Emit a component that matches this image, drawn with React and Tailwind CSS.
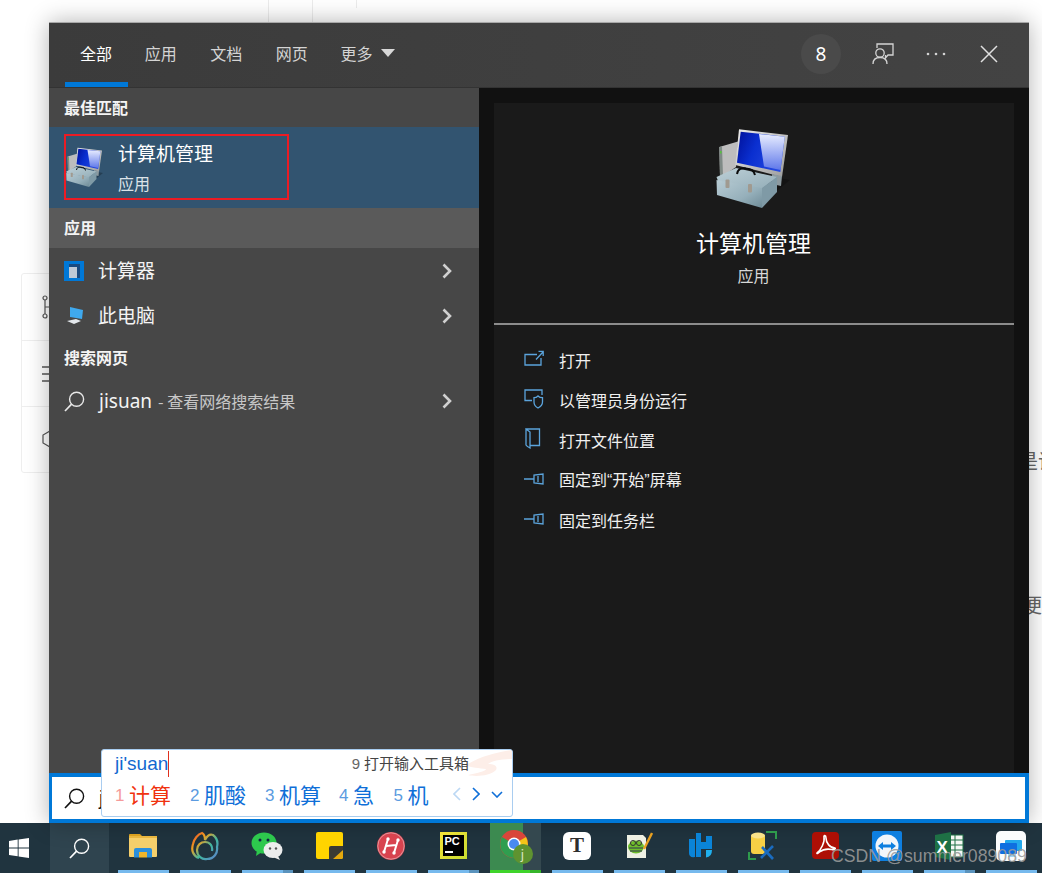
import React from "react";

const Toolbox = ({ w, h, id }) => (
  <svg width={w} height={h} viewBox="14 8 76 80" className="shrink-0">
    <defs>
      <linearGradient id={`${id}s`} x1="0" y1="0" x2="1" y2="0.35">
        <stop offset="0" stopColor="#00109a" />
        <stop offset="0.45" stopColor="#0a2fd0" />
        <stop offset="1" stopColor="#2448e0" />
      </linearGradient>
      <linearGradient id={`${id}r`} x1="0" y1="0" x2="0" y2="1">
        <stop offset="0" stopColor="#e8edff" />
        <stop offset="1" stopColor="#5f78ea" />
      </linearGradient>
      <linearGradient id={`${id}b`} x1="0" y1="0" x2="1" y2="1">
        <stop offset="0" stopColor="#b8ccd4" />
        <stop offset="0.6" stopColor="#96b0bb" />
        <stop offset="1" stopColor="#6f8c98" />
      </linearGradient>
      <linearGradient id={`${id}l`} x1="0" y1="0" x2="1" y2="1">
        <stop offset="0" stopColor="#bdd0d7" />
        <stop offset="1" stopColor="#93adb8" />
      </linearGradient>
      <linearGradient id={`${id}f`} x1="0" y1="0" x2="1" y2="1">
        <stop offset="0" stopColor="#ececec" />
        <stop offset="1" stopColor="#9c9c9c" />
      </linearGradient>
    </defs>
    <polygon points="60,82 76,70 88,60 78,58 60,72" fill="#000" opacity="0.25" />
    <polygon points="17.3,27 36,21.5 34,47 21,56 18,56" fill="#bdbdbd" />
    <polygon points="17.3,27 20,26.5 21,56 18,56" fill="#7f8a86" />
    <rect x="18" y="31" width="1.6" height="2.5" fill="#58c040" />
    <polygon points="37,9.3 86,15 80,57 33.3,45" fill={`url(#${id}f)`} />
    <polygon points="38.7,11.7 82.7,16.7 78.3,52 35,42.7" fill={`url(#${id}s)`} />
    <polygon points="57,14 82.7,16.7 78.5,50 62,46.5" fill={`url(#${id}r)`} />
    <polygon points="70,54 80,56 79,66 70,64" fill="#8d9aa0" />
    <polygon points="14.5,57 34,48 75,57 60,69 16,61" fill={`url(#${id}l)`} />
    <polygon points="14.5,60 60,68 60,88 15,75" fill={`url(#${id}b)`} />
    <polygon points="60,68 75,57 75,72 60,88" fill="#7f9aa6" />
    <path d="M35 54 C36 48 40 48 44 48.5 C49 49 52 50 53 55" fill="none" stroke="#0a0a0a" strokeWidth="2" />
    <rect x="23.5" y="59.5" width="4" height="8.5" rx="1" fill="#a09a90" />
    <rect x="46" y="64" width="4" height="8.5" rx="1" fill="#a09a90" />
  </svg>
);

const Chevron = () => (
  <svg width="12" height="18" viewBox="0 0 12 18" className="ml-auto mr-[26px] shrink-0">
    <path d="M2.5 2.5 L9 9 L2.5 15.5" fill="none" stroke="#d0d0d0" strokeWidth="2.6" />
  </svg>
);

const Magnifier = ({ color, size = 21, sw = 1.4 }) => (
  <svg width={size} height={size} viewBox="0 0 21 21" className="shrink-0">
    <circle cx="12.6" cy="8.2" r="7" fill="none" stroke={color} strokeWidth={sw} />
    <path d="M7.6 13.2 L1 20" fill="none" stroke={color} strokeWidth={sw + 0.3} />
  </svg>
);

const actionIcons = [
  <svg width="20" height="18" viewBox="0 0 20 18" fill="none" stroke="#5ba4dc" strokeWidth="1.3">
    <path d="M13 4.5 H1 V15 H17 V8" />
    <path d="M12 9.5 L19 2 M14.5 1.3 H19.2 V6" />
  </svg>,
  <svg width="20" height="20" viewBox="0 0 20 20" fill="none" stroke="#5ba4dc" strokeWidth="1.3">
    <path d="M8 11.5 H1 V1 H18 V6" />
    <path d="M14 7 C12.5 8.5 11 8.7 10 8.7 V13 C10 16 12 18 14 19 C16 18 18.5 16 18.5 13 V8.7 C17 8.7 15.5 8.5 14 7 Z" />
  </svg>,
  <svg width="18" height="21" viewBox="0 0 18 21" fill="none" stroke="#5ba4dc" strokeWidth="1.3">
    <path d="M2 1 H15.5 V17.5 H6 V20 C4 19 2.5 18 2 17 V1 L6 4 V17.5" />
  </svg>,
  <svg width="20" height="12" viewBox="0 0 20 12" fill="none" stroke="#5ba4dc" strokeWidth="1.3">
    <path d="M0 6 H10 M10 2 V10 L19 11 V1 Z M14 3 V9" />
  </svg>,
  <svg width="20" height="12" viewBox="0 0 20 12" fill="none" stroke="#5ba4dc" strokeWidth="1.3">
    <path d="M0 6 H10 M10 2 V10 L19 11 V1 Z M14 3 V9" />
  </svg>,
];

const Cand = ({ n, t, nc, tc, cls }) => (
  <div className={`flex items-center ${cls}`}>
    <span className={`text-[17px] w-[14px] pt-[3px] [font-family:'Liberation_Sans',sans-serif] ${nc}`}>{n}</span>
    <span className={`text-[21px] leading-[28px] ${tc}`}>{t}</span>
  </div>
);

const FileExplorer = () => (
  <svg width="30" height="26" viewBox="0 0 30 26">
    <path d="M1 2 Q1 1 2 1 H12 L14 3 H1 Z" fill="#d9a020" />
    <rect x="1" y="3" width="28" height="21" rx="1" fill="#f5cf6b" />
    <rect x="1" y="3" width="28" height="2" fill="#e8b63f" />
    <path d="M6 24.5 V17 Q6 15 8 15 H22 Q24 15 24 17 V24.5 H19 V19 H11 V24.5 Z" fill="#2b8fdc" />
    <rect x="11" y="19" width="8" height="5.5" fill="#eeb52c" />
  </svg>
);
const Navicat = () => (
  <svg width="30" height="30" viewBox="0 0 30 30" fill="none" strokeWidth="2.2">
    <defs>
      <linearGradient id="nv" x1="0" y1="0" x2="1" y2="1">
        <stop offset="0" stopColor="#e8452a" />
        <stop offset="0.3" stopColor="#f0a020" />
        <stop offset="0.6" stopColor="#40b8a0" />
        <stop offset="1" stopColor="#6080d0" />
      </linearGradient>
    </defs>
    <path d="M9 27 C3 25 1 19 3 13 C4 8 8 3 12 2 C14 3 15 6 15 9 C17 5 20 3 23 4 C27 7 28 12 27 16 C28 22 24 28 17 28 C12 29 7 25 7 19 C7 14 11 11 15 11 C20 11 23 15 22 20" stroke="url(#nv)" />
  </svg>
);
const WeChat = () => (
  <svg width="32" height="28" viewBox="0 0 32 28">
    <ellipse cx="13" cy="11" rx="12.5" ry="10.5" fill="#2dc84d" />
    <path d="M6 18 L5 24 L11 20 Z" fill="#2dc84d" />
    <circle cx="9" cy="8" r="1.5" fill="#124" />
    <circle cx="17" cy="8" r="1.5" fill="#124" />
    <ellipse cx="22" cy="18" rx="9.5" ry="8" fill="#eceded" />
    <path d="M27 24 L29 28 L23 25.5 Z" fill="#eceded" />
    <circle cx="19" cy="16.5" r="1.2" fill="#555" />
    <circle cx="25" cy="16.5" r="1.2" fill="#555" />
  </svg>
);
const Sticky = () => (
  <svg width="27" height="27" viewBox="0 0 27 27">
    <rect width="27" height="27" rx="2" fill="#ffd400" />
    <path d="M13 27 V16 Q13 14 15 14 H27 V22 L22 27 Z" fill="#3a3a34" />
    <path d="M27 18 V25 Q27 27 25 27 H17 Z" fill="#e3a80e" />
  </svg>
);
const RedH = () => (
  <svg width="28" height="28" viewBox="0 0 28 28">
    <circle cx="14" cy="14" r="14" fill="#d8434f" />
    <circle cx="14" cy="14" r="13.2" fill="none" stroke="#eee" strokeWidth="0.8" opacity="0.6" />
    <path d="M11 7 L7 20 M21 8 L17 21 M9 14 L19 13" stroke="#fff" strokeWidth="2" fill="none" strokeLinecap="round" />
    <circle cx="11" cy="7" r="1.7" fill="#fff" />
    <circle cx="7" cy="20" r="1.7" fill="#fff" />
    <circle cx="21" cy="8" r="1.7" fill="#fff" />
    <circle cx="17" cy="21" r="1.7" fill="#fff" />
  </svg>
);
const PyCharm = () => (
  <div className="w-[27px] h-[27px] bg-gradient-to-br from-[#f5e23a] to-[#c8dc30] p-[3px]">
    <div className="w-full h-full bg-black flex flex-col pl-[2px] text-white font-bold text-[11px] leading-[13px] [font-family:'Liberation_Sans',sans-serif]">
      PC
      <span className="mt-[3px] block w-[8px] h-[1.5px] bg-white" />
    </div>
  </div>
);
const Chrome = () => (
  <div className="relative w-[31px] h-[31px]">
    <svg width="28" height="28" viewBox="0 0 28 28">
      <circle cx="14" cy="14" r="14" fill="#d9453a" />
      <path d="M14 14 L26 7 A14 14 0 0 1 14 28 Z" fill="#f5c518" />
      <path d="M14 14 L14 28 A14 14 0 0 1 2 7 Z" fill="#2f9e4f" />
      <circle cx="14" cy="14" r="6.5" fill="#fff" />
      <circle cx="14" cy="14" r="5" fill="#4a8af0" />
    </svg>
    <div className="absolute right-[-2px] bottom-[-3px] w-[20px] h-[20px] rounded-full bg-[#5f9330] flex items-center justify-center text-[12px] text-[#dfe8c8]">j</div>
  </div>
);
const Typora = () => (
  <div className="w-[28px] h-[28px] rounded-[6px] bg-white flex items-center justify-center text-[#2e2e2e] text-[21px] font-bold [font-family:'Liberation_Serif',serif]">T</div>
);
const NotepadPP = () => (
  <svg width="28" height="28" viewBox="0 0 28 28">
    <path d="M2 3 H18 L21 6 V26 H2 Z" fill="#eef0e4" />
    <ellipse cx="11" cy="15" rx="8" ry="6.5" fill="#6fbf2c" />
    <circle cx="8" cy="11" r="2.5" fill="none" stroke="#333" strokeWidth="1" />
    <circle cx="14" cy="11" r="2.5" fill="none" stroke="#333" strokeWidth="1" />
    <path d="M4 16 H18 M5 19 H17" stroke="#335" strokeWidth="1" />
    <path d="M19 17 L27 1" stroke="#e8a020" strokeWidth="2.4" />
  </svg>
);
const BlueH = () => (
  <svg width="24" height="25" viewBox="0 0 24 25">
    <path d="M0 6 H6 V24 Q0 25 0 20 Z" fill="#0a84d8" />
    <path d="M7 0 H12 V9 H17 V3 H23 V16 H12 V24 H7 Z" fill="#0a84d8" />
    <path d="M17 17 H23 Q23 24 17 24.5 Z" fill="#20b0ee" />
  </svg>
);
const DbTool = () => (
  <svg width="30" height="30" viewBox="0 0 30 30">
    <path d="M18 1 H28 V8 M1 21 V28 H8" fill="none" stroke="#2e9a4c" strokeWidth="2" />
    <rect x="3" y="3" width="14" height="20" rx="3" fill="#f6cf45" />
    <ellipse cx="10" cy="4.5" rx="7" ry="3" fill="#f9e28a" />
    <path d="M14 16 L25 28 M25 15 L13 27" stroke="#1a6cc0" strokeWidth="2.6" />
  </svg>
);
const Acrobat = () => (
  <svg width="27" height="27" viewBox="0 0 27 27">
    <rect width="27" height="27" rx="4" fill="#ad0f05" />
    <path d="M5 21 C9 18 13 10 12 5 C11.5 3 14 3 14 6 C14 11 18 16 23 16 C24 17 22 18 20 17.5 C15 16.5 10 18 7.5 20 C6 21.5 4.5 22 5 21 Z" fill="none" stroke="#fff" strokeWidth="1.6" />
  </svg>
);
const TeamViewer = () => (
  <svg width="30" height="30" viewBox="0 0 30 30">
    <rect width="30" height="30" rx="2" fill="#0e7fe0" />
    <circle cx="15" cy="15" r="11.5" fill="#f2f6fb" />
    <path d="M6 15 L11 11 V13.5 H19 V11 L24 15 L19 19 V16.5 H11 V19 Z" fill="#0e7fe0" />
  </svg>
);
const Excel = () => (
  <div className="relative w-[29px] h-[28px]">
    <svg width="29" height="28" viewBox="0 0 29 28" className="absolute left-0 top-0">
      <rect x="14" y="3" width="14" height="22" fill="#f5f7f4" stroke="#1e7145" />
      <path d="M14 8 H28 M14 13 H28 M14 18 H28 M20 3 V25" stroke="#1e7145" />
      <polygon points="0,3 16,0 16,28 0,25" fill="#1e7145" />
    </svg>
    <span className="absolute left-[2px] top-[3px] text-white text-[17px] font-bold [font-family:'Liberation_Sans',sans-serif]">X</span>
  </div>
);
const WhiteApp = () => (
  <svg width="30" height="30" viewBox="0 0 30 30">
    <rect width="30" height="30" rx="5" fill="#fafcfd" />
    <rect x="9" y="9" width="17" height="11" rx="1" fill="#22a8ec" />
    <rect x="4" y="12" width="17" height="11" rx="1" fill="#0f6fe0" />
    <rect x="12" y="23" width="8" height="3" fill="#9fd6f4" />
  </svg>
);

const taskItems = [
  { icon: <FileExplorer /> },
  { icon: <Navicat /> },
  { icon: <WeChat />, stack: true },
  { icon: <Sticky /> },
  { icon: <RedH /> },
  { icon: <PyCharm />, stack: true },
  { icon: <Chrome />, active: true },
  { icon: <Typora /> },
  { icon: <NotepadPP /> },
  { icon: <BlueH /> },
  { icon: <DbTool /> },
  { icon: <Acrobat /> },
  { icon: <TeamViewer /> },
  { icon: <Excel />, stack: true },
  { icon: <WhiteApp /> },
];

const tabs = ["应用", "文档", "网页"];
const Q = ({ c }) => <span className="[font-family:'Liberation_Sans',sans-serif]">{c}</span>;
const actions = [
  "打开",
  "以管理员身份运行",
  "打开文件位置",
  <>固定到<Q c="“" />开始<Q c="”" />屏幕</>,
  "固定到任务栏",
];

export default function App() {
  return (
    <div className="relative w-[1042px] h-[873px] overflow-hidden bg-white flex flex-col [font-family:'Noto_Sans_CJK_SC','Noto_Sans',sans-serif]">
      {/* page behind the window */}
      <div className="flex-1 flex flex-col min-h-0">
        <div className="flex h-[22px] ml-[268px]">
          <div className="w-[44px] border-l border-[#ececec]" />
          <div className="w-[44px] border-l border-[#ececec]" />
          <div className="h-[8px] border-l border-[#ececec]" />
        </div>
        <div className="flex items-start">
          <div className="ml-[21px] mt-[251px] w-[100px] h-[200px] shrink-0 bg-white border border-[#eeeeee] rounded-[3px] flex flex-col text-[#555]">
            <div className="h-[67px] pl-[20px] flex items-center border-b border-[#eeeeee]">
              <svg width="10" height="24" viewBox="0 0 10 24" fill="none" stroke="#555" strokeWidth="1.2">
                <circle cx="3" cy="3" r="2" />
                <circle cx="3" cy="21" r="2" />
                <path d="M3 5 V19 M3 12 H9" />
              </svg>
            </div>
            <div className="h-[66px] pl-[20px] flex items-center border-b border-[#eeeeee]">
              <svg width="14" height="18" viewBox="0 0 14 18" stroke="#555" strokeWidth="1.4">
                <path d="M0 2 H14 M0 9 H14 M0 16 H14" />
              </svg>
            </div>
            <div className="h-[64px] pl-[20px] flex items-center">
              <svg width="16" height="18" viewBox="0 0 16 18" fill="none" stroke="#555" strokeWidth="1.2">
                <path d="M8 1 L15 5 V13 L8 17 L1 13 V5 Z" />
              </svg>
            </div>
          </div>
          <div className="ml-[897px] mt-[425px] shrink-0 text-[#666] text-[20px] leading-[28px] whitespace-nowrap">
            <div>是议</div>
            <div className="mt-[116px] pl-[4px]">便</div>
          </div>
        </div>
      </div>

      {/* search window */}
      <div className="absolute left-[49px] top-[22px] w-[980px] h-[801px] flex flex-col border-t border-[#a8a8a8] shadow-[0_0_22px_rgba(0,0,0,0.3)] text-white">
        <header className="h-[65px] shrink-0 bg-gradient-to-r from-[#3b3b3b] to-[#434343] flex items-stretch pl-[16px] border-b border-[#333]">
          <div className="w-[63px] flex items-center justify-center border-b-[5px] border-[#0078d7] pr-[1px] text-[16px] text-white">全部</div>
          {tabs.map((t) => (
            <div key={t} className="w-[65.5px] pb-[5px] flex items-center justify-center text-[16px] text-[#d4d4d4]">{t}</div>
          ))}
          <div className="flex items-center pb-[5px] pl-[16px] text-[16px] text-[#d4d4d4]">
            更多
            <svg width="14" height="8" viewBox="0 0 14 8" className="ml-[8px]">
              <path d="M0 0 H14 L7 8 Z" fill="#d8d8d8" />
            </svg>
          </div>
          <div className="ml-auto flex items-center pb-[2px]">
            <div className="w-[40px] h-[40px] rounded-full bg-[#4a4a4a] flex items-center justify-center text-[19px] text-white [font-family:'Noto_Sans',sans-serif]">8</div>
            <svg width="22" height="22" viewBox="0 0 22 22" fill="none" stroke="#d4d4d4" strokeWidth="1.3" className="ml-[31px]">
              <path d="M5 5 V1 H21 V12 H16 L13.5 15 V12" />
              <circle cx="8" cy="10" r="4.2" />
              <path d="M1 21 C1 16 4 14.5 8 14.5 C12 14.5 15 16 15 21" />
            </svg>
            <svg width="20" height="4" viewBox="0 0 20 4" fill="#d4d4d4" className="ml-[32px]">
              <circle cx="2" cy="2" r="1.3" />
              <circle cx="10" cy="2" r="1.3" />
              <circle cx="18" cy="2" r="1.3" />
            </svg>
            <svg width="18" height="18" viewBox="0 0 18 18" stroke="#e0e0e0" strokeWidth="1.5" className="ml-[34px] mr-[31px]">
              <path d="M1 1 L17 17 M17 1 L1 17" />
            </svg>
          </div>
        </header>

        <div className="flex-1 flex min-h-0">
          <aside className="w-[430px] shrink-0 bg-[#474747] flex flex-col">
            <div className="h-[40px] -mt-[1px] pl-[15px] flex items-center text-[16px] font-bold text-[#f4f4f4]">最佳匹配</div>
            <div className="h-[81px] -mt-[0px] bg-[#325470] pl-[15px] pt-[7px]">
              <div className="w-[225px] h-[66px] border-[2px] border-[#ec1c24] flex items-center">
                <Toolbox w={38} h={40} id="sm" />
                <div className="ml-[14px] -mt-[2px] flex flex-col">
                  <span className="text-[19px] leading-[26px] text-white">计算机管理</span>
                  <span className="text-[16px] leading-[20px] mt-[7px] text-[#dde3e8]">应用</span>
                </div>
              </div>
            </div>
            <div className="h-[40px] pl-[15px] pb-[2px] bg-[#5a5a5a] flex items-center text-[16px] font-bold text-[#f4f4f4]">应用</div>
            <div className="h-[46px] pl-[15px] flex items-center text-[19px] text-[#f4f4f4]">
              <div className="w-[20px] h-[20px] bg-[#0078d7] flex items-center justify-center shrink-0">
                <div className="w-[11px] h-[14px] bg-[#bfc9d6] border-t-[3px] border-r-[3px] border-[#1a4a80]" />
              </div>
              <span className="ml-[14px] -mt-[2px]">计算器</span>
              <Chevron />
            </div>
            <div className="h-[44px] pl-[15px] flex items-center text-[19px] text-[#f4f4f4]">
              <svg width="20" height="20" viewBox="0 0 20 20" className="shrink-0">
                <polygon points="6,1 19,4 18,13 6,11" fill="#3fa9ee" />
                <path d="M3 15 L12 13 L17 15 L10 18 Z" fill="#e4e8ec" />
              </svg>
              <span className="ml-[14px] -mt-[2px]">此电脑</span>
              <Chevron />
            </div>
            <div className="h-[40px] pl-[15px] pb-[2px] flex items-center text-[16px] font-bold text-[#f4f4f4]">搜索网页</div>
            <div className="h-[46px] pl-[15px] flex items-center text-[#f4f4f4]">
              <Magnifier color="#e8e8e8" />
              <span className="ml-[14px] text-[19px] [font-family:'Noto_Sans',sans-serif]">jisuan</span>
              <span className="ml-[6px] text-[16px] text-[#c8c8c8]">- 查看网络搜索结果</span>
              <Chevron />
            </div>
          </aside>

          <main className="flex-1 bg-[#111111] px-[15px] pt-[15px]">
            <div className="h-full bg-[#1a1a1a] flex flex-col">
              <div className="h-[222px] shrink-0 flex flex-col items-center pr-[1px] border-b-[2px] border-[#8c8c8c]">
                <div className="mt-[25px]"><Toolbox w={76} h={80} id="lg" /></div>
                <span className="mt-[17px] text-[23px] leading-[34px] text-white">计算机管理</span>
                <span className="mt-[6px] text-[16px] leading-[20px] text-[#d8d8d8]">应用</span>
              </div>
              <ul className="pt-[15px] pl-[30px]">
                {actions.map((a, i) => (
                  <li key={i} className="h-[40px] flex items-center text-[16px] text-[#f0f0f0]">
                    <span className="w-[35px] h-[24px] shrink-0 flex items-center -mt-[3px]">{actionIcons[i]}</span>
                    <span>{a}</span>
                  </li>
                ))}
              </ul>
            </div>
          </main>
        </div>

        <div className="h-[50px] shrink-0 bg-white border-[4px] border-l-[3px] border-[#0078d7] flex items-center pl-[12px]">
          <Magnifier color="#111" />
          <span className="ml-[14px] text-[20px] text-[#111] [font-family:'Liberation_Sans',sans-serif]">ji'suan</span>
        </div>
      </div>

      {/* IME candidate popup */}
      <div className="absolute left-[101px] top-[749px] w-[412px] h-[68px] bg-white border border-[#a9cdf0] rounded-[3px] overflow-hidden">
        <div className="h-[28px] flex items-center pl-[13px] relative">
          <svg width="50" height="28" viewBox="0 0 50 28" className="absolute right-0 top-0">
            <path d="M4 15 C20 6 32 3 50 0 V9 C38 9 30 11 26 14 C32 14 36 16 34 20 C28 26 14 27 6 25 C16 23 24 21 24 19 C18 18 8 18 4 15 Z" fill="#fdeee8" />
          </svg>
          <span className="text-[19px] text-[#1268cf] leading-[26px] [font-family:'Liberation_Sans',sans-serif] border-r border-[#e0301e]">ji'suan</span>
          <span className="relative ml-auto mr-[43px] text-[15px] text-[#444]"><span className="text-[#666] mr-[4px] [font-family:'Liberation_Sans',sans-serif]">9</span>打开输入工具箱</span>
        </div>
        <div className="flex items-center pl-[13px] h-[32px]">
          <Cand n="1" t="计算" nc="text-[#f59a9a]" tc="text-[#f0320f]" cls="w-[75px]" />
          <Cand n="2" t="肌酸" nc="text-[#5b9be0]" tc="text-[#0f6fd8]" cls="w-[75px]" />
          <Cand n="3" t="机算" nc="text-[#5b9be0]" tc="text-[#0f6fd8]" cls="w-[74px]" />
          <Cand n="4" t="急" nc="text-[#5b9be0]" tc="text-[#0f6fd8]" cls="w-[54.5px]" />
          <Cand n="5" t="机" nc="text-[#5b9be0]" tc="text-[#0f6fd8]" cls="w-[59px]" />
          <svg width="8" height="14" viewBox="0 0 8 14" fill="none" stroke="#bcd8f4" strokeWidth="1.6"><path d="M7 1 L1 7 L7 13" /></svg>
          <svg width="8" height="14" viewBox="0 0 8 14" fill="none" stroke="#0f6fd8" strokeWidth="1.6" className="ml-[11px]"><path d="M1 1 L7 7 L1 13" /></svg>
          <svg width="12" height="7" viewBox="0 0 12 7" fill="none" stroke="#0f6fd8" strokeWidth="1.6" className="ml-[11px]"><path d="M1 1 L6 6 L11 1" /></svg>
        </div>
      </div>

      {/* taskbar */}
      <footer className="h-[50px] shrink-0 bg-[#20343f] flex items-stretch">
        <div className="w-[50px] flex items-center pl-[9px]">
          <svg width="20" height="20" viewBox="0 0 20 20" fill="#fff">
            <polygon points="0,3 8.7,1.6 8.7,9.4 0,9.4" />
            <polygon points="9.6,1.5 20,0 20,9.4 9.6,9.4" />
            <polygon points="0,10.4 8.7,10.4 8.7,18.2 0,17" />
            <polygon points="9.6,10.4 20,10.4 20,20 9.6,18.4" />
          </svg>
        </div>
        <div className="w-[59px] bg-[#2f444f] flex items-center justify-center">
          <Magnifier color="#ffffff" />
        </div>
        <div className="w-[3px]" />
        {taskItems.map((it, i) => (
          <div key={i} className="relative w-[62px] shrink-0 flex items-center justify-center pb-[5px]">
            {it.active && (
              <div className="absolute left-[6px] right-[5px] inset-y-0 flex">
                <div className="w-[33px] bg-[#3c8a50]" />
                <div className="flex-1 bg-[#34484f]" />
              </div>
            )}
            <div className="relative">{it.icon}</div>
            <div className={`absolute left-[6px] right-[5px] bottom-0 h-[3px] flex ${it.active ? "bg-[#3fd42a]" : "bg-[#76b9ed]"}`}>
              {it.stack && <div className="ml-auto w-[10px] bg-[#5a93bd]" />}
              {it.active && <div className="ml-auto w-[11px] bg-[#36b52a]" />}
            </div>
          </div>
        ))}
      </footer>

      {/* watermark */}
      <div className="absolute left-[831px] top-[844px] text-[17.7px] leading-[24px] text-[#9a9a9a]/90 whitespace-nowrap [font-family:'Liberation_Sans',sans-serif]">CSDN @summer089089</div>
    </div>
  );
}
